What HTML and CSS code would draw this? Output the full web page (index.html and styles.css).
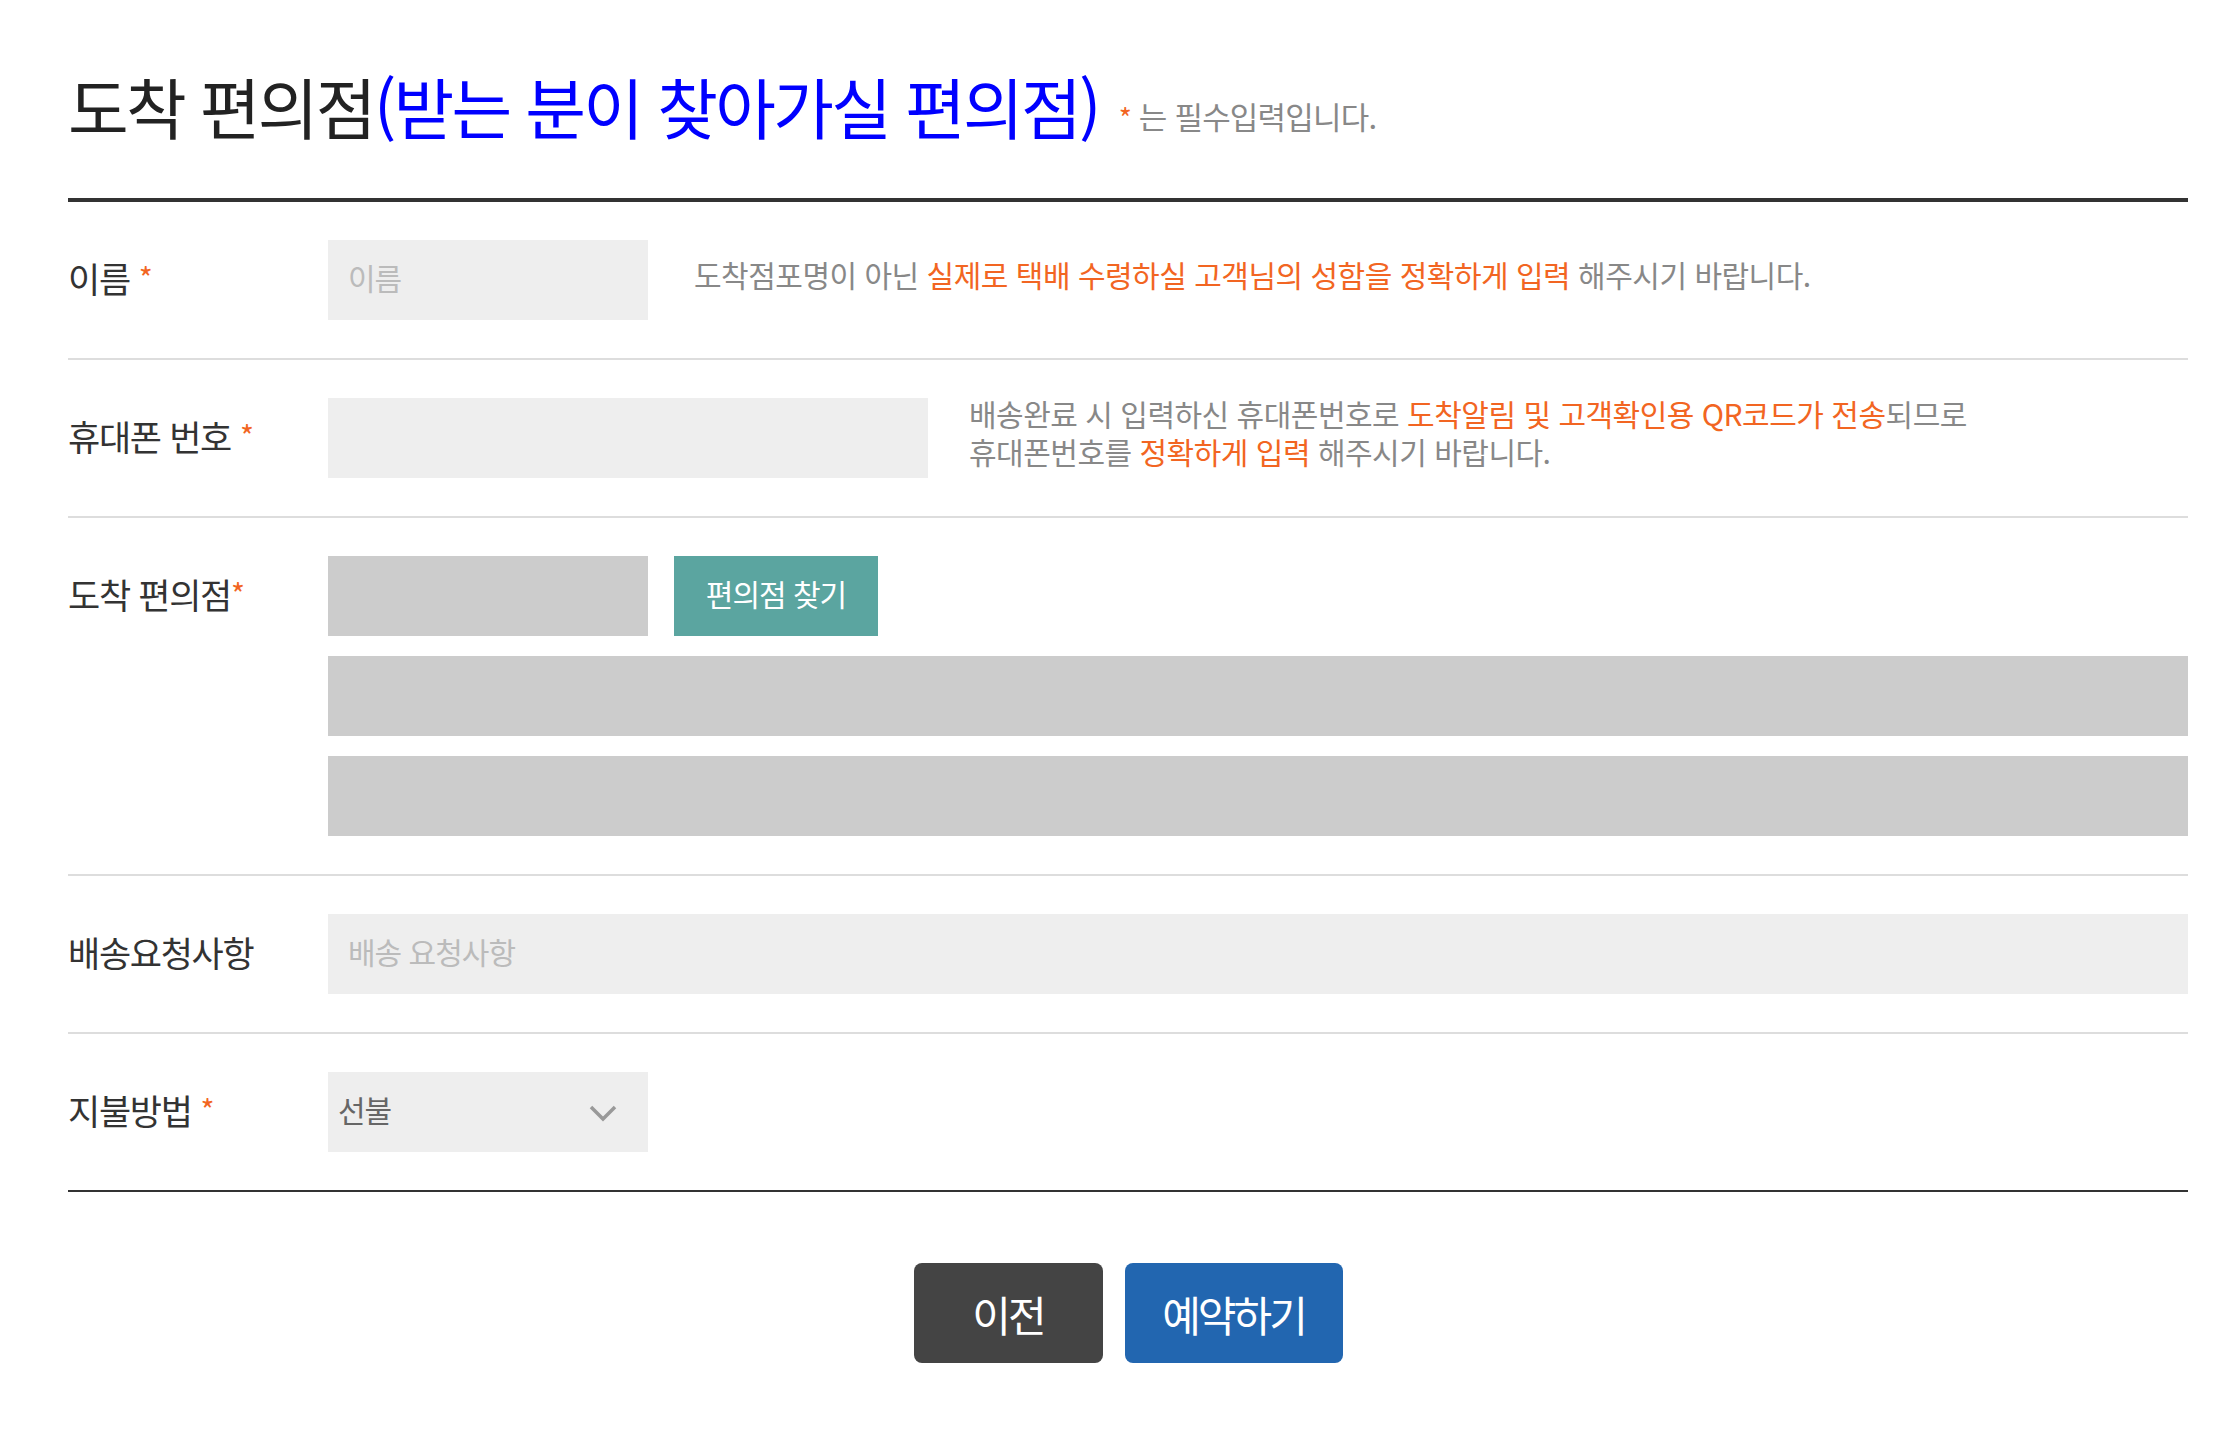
FILE: index.html
```html
<html lang="ko">
<head>
    <meta charset="UTF-8">
    <title>도착 편의점</title>
    <link rel="stylesheet" href="styles.css">
</head>
<body>
<div class="wrap">
    <div class="head">
        <h2 class="tit">도착 편의점<span class="blue">(받는 분이 찾아가실 편의점)</span></h2>
        <p class="req"><em>*</em> 는 필수입력입니다.</p>
    </div>

    <div class="form">
        <div class="row">
            <div class="th">이름 <em>*</em></div>
            <div class="td">
                <div class="line">
                    <input type="text" class="ipt w320" placeholder="이름">
                    <p class="help">도착점포명이 아닌 <span>실제로 택배 수령하실 고객님의 성함을 정확하게 입력</span> 해주시기 바랍니다.</p>
                </div>
            </div>
        </div>

        <div class="row">
            <div class="th">휴대폰 번호 <em>*</em></div>
            <div class="td">
                <div class="line">
                    <input type="text" class="ipt w600">
                    <p class="help near">배송완료 시 입력하신 휴대폰번호로 <span>도착알림 및 고객확인용 QR코드가 전송</span>되므로<br>휴대폰번호를 <span>정확하게 입력</span> 해주시기 바랍니다.</p>
                </div>
            </div>
        </div>

        <div class="row">
            <div class="th">도착 편의점<em class="tight">*</em></div>
            <div class="td">
                <div class="line">
                    <input type="text" class="ipt w320 off" readonly>
                    <button type="button" class="btn-find">편의점 찾기</button>
                </div>
                <input type="text" class="ipt full off" readonly>
                <input type="text" class="ipt full off" readonly>
            </div>
        </div>

        <div class="row">
            <div class="th">배송요청사항</div>
            <div class="td">
                <input type="text" class="ipt full" placeholder="배송 요청사항">
            </div>
        </div>

        <div class="row">
            <div class="th">지불방법 <em>*</em></div>
            <div class="td">
                <div class="sel">
                    <select>
                        <option>선불</option>
                        <option>착불</option>
                    </select>
                    <svg class="arrow" width="30" height="18" viewBox="0 0 30 18">
                        <polyline points="3,3 15,15 27,3" fill="none" stroke="#999" stroke-width="3.5"/>
                    </svg>
                </div>
            </div>
        </div>
    </div>

    <div class="btns">
        <button type="button" class="btn-prev">이전</button>
        <button type="button" class="btn-ok">예약하기</button>
    </div>
</div>
</body>
</html>
```

FILE: styles.css
```css
* {
    margin: 0;
    padding: 0;
    box-sizing: border-box;
}

body {
    font-family: "Noto Sans CJK KR", "Noto Sans", sans-serif;
    color: #333;
    background: #fff;
}

em {
    font-style: normal;
    color: #f26522;
}

.wrap {
    width: 2120px;
    margin-left: 68px;
}

/* 제목 */
.head {
    display: flex;
    align-items: baseline;
    padding-top: 60px;
    padding-bottom: 48px;
    border-bottom: 4px solid #333;
}

.tit {
    font-size: 66px;
    font-weight: 400;
    line-height: 90px;
    letter-spacing: -2.7px;
    color: #222;
}

.tit .blue {
    color: #0000ff;
}

.req {
    position: relative;
    top: -5px;
    margin-left: 20px;
    font-size: 31px;
    letter-spacing: -0.8px;
    color: #888;
}

.req em {
    font-size: 28px;
}

/* 입력폼 */
.row {
    display: flex;
    padding: 38px 0;
    border-bottom: 2px solid #ddd;
}

.row:last-child {
    border-bottom: 2px solid #333;
}

.th {
    width: 260px;
    height: 80px;
    padding-bottom: 6px;
    display: flex;
    align-items: center;
    font-size: 35px;
    letter-spacing: -1.3px;
    color: #333;
}

.th em {
    font-size: 30px;
    margin-left: 9px;
}

.th em.tight {
    margin-left: 0;
}

.td {
    flex: 1;
    display: flex;
    flex-direction: column;
    gap: 20px;
}

.line {
    display: flex;
    align-items: center;
}

.ipt {
    height: 80px;
    border: 0;
    outline: 0;
    background: #eee;
    padding: 0 20px 6px;
    font-family: inherit;
    font-size: 30px;
    letter-spacing: -1px;
    color: #333;
}

.ipt::placeholder {
    color: #bbb;
}

.ipt.off {
    background: #ccc;
}

.w320 {
    width: 320px;
}

.w600 {
    width: 600px;
}

.full {
    width: 100%;
}

.help {
    margin-left: 46px;
    margin-top: -12px;
    font-size: 30px;
    line-height: 38px;
    letter-spacing: -0.5px;
    color: #888;
}

.help.near {
    margin-left: 41px;
}

.help span {
    display: inline-block;
    line-height: 38px;
    color: #f26522;
}

.btn-find {
    width: 204px;
    height: 80px;
    margin-left: 26px;
    padding-bottom: 6px;
    border: 0;
    background: #5ba5a0;
    color: #fff;
    font-family: inherit;
    font-size: 30px;
    letter-spacing: -1px;
    cursor: pointer;
}

.sel {
    position: relative;
    width: 320px;
    height: 80px;
}

.sel select {
    width: 100%;
    height: 80px;
    border: 0;
    outline: 0;
    background: #eee;
    padding: 0 10px 6px;
    font-family: inherit;
    font-size: 30px;
    letter-spacing: -1px;
    color: #666;
    -webkit-appearance: none;
    appearance: none;
}

.sel .arrow {
    position: absolute;
    right: 30px;
    top: 32px;
    pointer-events: none;
}

/* 버튼 */
.btns {
    display: flex;
    justify-content: center;
    gap: 22px;
    margin-top: 71px;
}

.btns button {
    height: 100px;
    border: 0;
    border-radius: 8px;
    color: #fff;
    font-family: inherit;
    font-size: 42px;
    letter-spacing: -3px;
    cursor: pointer;
}

.btn-prev {
    width: 189px;
    background: #444;
}

.btn-ok {
    width: 218px;
    background: #2266b0;
}
```
